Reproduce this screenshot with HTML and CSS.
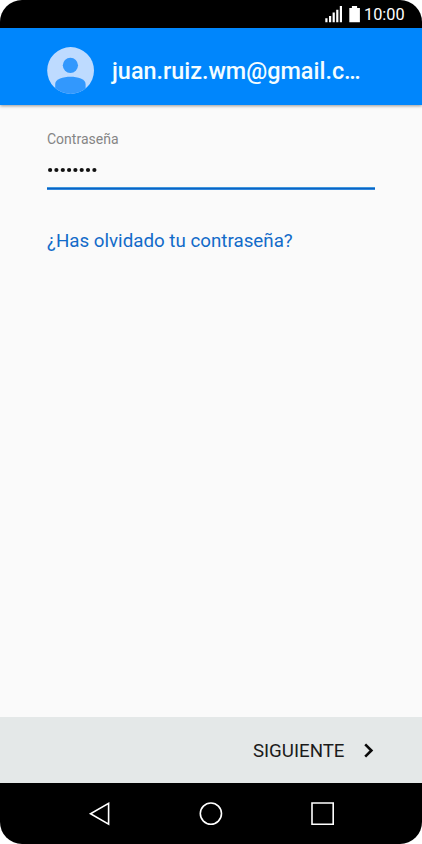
FILE: index.html
```
<!DOCTYPE html>
<html lang="es">
<head>
<meta charset="utf-8">
<title>Contraseña</title>
<link rel="stylesheet" href="styles.css">
</head>
<body>
<div class="phone">
  <div class="status">
    <svg class="status-icons" width="36" height="18" viewBox="0 0 36 18" fill="#fff">
      <path d="M.3 13.3h2.2v4H.3zM4 11h2.2v6.3H4zM7.6 7.6h2.2v9.7H7.6zM11.2 4.7h2.2v12.6h-2.2zM14.8 1h2.2v16.3h-2.2z"/>
      <path d="M24.3 3h2.6V1h5.2v2h2.8v14.3H24.3z"/>
    </svg>
    <span class="clock">10:00</span>
  </div>
  <header class="header">
    <svg class="avatar" width="48" height="48" viewBox="0 0 48 48">
      <defs><clipPath id="disc"><circle cx="23.6" cy="23.5" r="23.4"/></clipPath></defs>
      <circle cx="23.6" cy="23.5" r="23.4" fill="#bedbff"/>
      <g fill="#3298fd" clip-path="url(#disc)">
        <circle cx="23.4" cy="18.3" r="7.6"/>
        <path d="M8.2 48V37c0-5 8-7.3 15.3-7.3S38.6 32 38.6 37v11z"/>
      </g>
    </svg>
    <div class="email">juan.ruiz.wm@gmail.c…</div>
  </header>
  <main class="content">
    <div class="label">Contraseña</div>
    <div class="field">
      <svg width="52" height="6" viewBox="0 0 52 6" fill="#111">
        <circle cx="3.1" cy="3" r="2.1"/><circle cx="9.4" cy="3" r="2.1"/><circle cx="15.8" cy="3" r="2.1"/><circle cx="22.1" cy="3" r="2.1"/><circle cx="28.4" cy="3" r="2.1"/><circle cx="34.7" cy="3" r="2.1"/><circle cx="41" cy="3" r="2.1"/><circle cx="47.4" cy="3" r="2.1"/>
      </svg>
    </div>
    <a class="forgot">¿Has olvidado tu contraseña?</a>
  </main>
  <footer class="footer">
    <span class="next">SIGUIENTE</span>
    <svg width="10" height="16" viewBox="0 0 10 16" fill="none" stroke="#0a0a0a" stroke-width="2.6"><path d="M1.2 1.4 7.4 7.5 1.2 13.6"/></svg>
  </footer>
  <nav class="nav">
    <svg width="422" height="61" viewBox="0 0 422 61" fill="none" stroke="#fff" stroke-width="1.6">
      <path d="M108.6 20.3v20.8L90.5 30.7z"/>
      <circle cx="210.9" cy="30.6" r="10.6"/>
      <path d="M312 20h21.2v21.2H312z"/>
    </svg>
  </nav>
</div>
</body>
</html>
```
FILE: styles.css
```
body {
  margin: 0;
  background: #fff;
  font-family: Roboto, sans-serif;
}
.phone {
  width: 422px;
  height: 844px;
  display: flex;
  flex-direction: column;
  overflow: hidden;
  border-radius: 22px;
  background: #fafafa;
}
.status {
  box-sizing: border-box;
  height: 28px;
  padding: 5px 17px 0 0;
  display: flex;
  justify-content: flex-end;
  gap: 3px;
  background: #000;
}
.clock {
  width: 41px;
  color: #fff;
  font-size: 16.3px;
  line-height: 20px;
  white-space: nowrap;
}
.header {
  box-sizing: border-box;
  height: 77px;
  padding: 19px 0 0 47px;
  display: flex;
  gap: 17px;
  flex-shrink: 0;
  background: #0086fc;
  border-bottom: 0;
  box-shadow: 0 1px 3px rgba(0, 0, 0, .4);
}
.email {
  color: #f4fdff;
  font-size: 23.4px;
  font-weight: 500;
  line-height: 48px;
  white-space: nowrap;
}
.content {
  flex: 1;
  padding: 25px 47px 0;
}
.label {
  color: #858585;
  font-size: 14px;
  line-height: 18px;
}
.field {
  box-sizing: border-box;
  height: 42px;
  padding-top: 19px;
  background: linear-gradient(#3f97dc 1px, #0b62c4 1px 2px, #3188dc 2px) bottom / 100% 3px no-repeat;
  line-height: 0;
}
.forgot {
  display: block;
  margin-top: 39px;
  color: #126bc9;
  font-size: 18.75px;
  line-height: 24px;
  white-space: nowrap;
}
.footer {
  box-sizing: border-box;
  height: 66px;
  padding: 2px 48px 0 0;
  display: flex;
  align-items: center;
  justify-content: flex-end;
  gap: 19.5px;
  background: #e4e8e8;
}
.next {
  color: #1b1b1b;
  font-size: 18.7px;
  line-height: 24px;
}
.nav {
  height: 61px;
  background: #000;
}
```
